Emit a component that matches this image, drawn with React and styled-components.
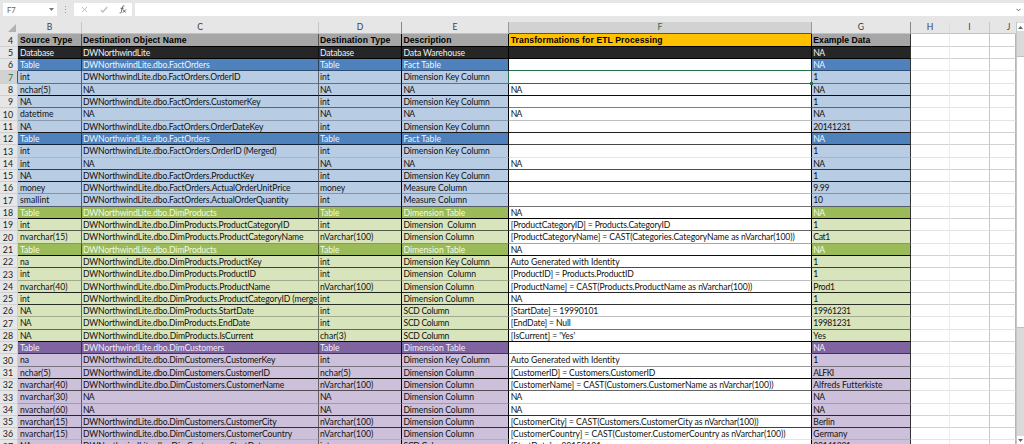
import React, { useLayoutEffect, useRef, useState } from "react";
import styled, { createGlobalStyle } from "styled-components";

const Global = createGlobalStyle`
  * { box-sizing: border-box; }
  body { margin: 0; overflow: hidden; background: #e6e6e6; font-family: Lato, "Liberation Sans", sans-serif; }
`;

const Window = styled.div`
  width: 1024px; height: 444px; overflow: hidden;
  display: flex; flex-direction: column; background: #e6e6e6;
`;
const FormulaBar = styled.div`
  height: 22px; flex: none; padding: 3px 0 6px 3px; display: flex; background: #e6e6e6;
`;
const NameBox = styled.div`
  width: 54px; height: 13px; background: #fff; display: flex; align-items: center;
  justify-content: space-between; padding: 0 3px 0 4px; color: #666; font-size: 7.6px;
`;
const Grip = styled.div`
  width: 17px; height: 13px; display: flex; align-items: center; justify-content: center;
`;
const Tools = styled.div`
  width: 58px; height: 13px; background: #fff; display: flex; align-items: center;
  justify-content: space-between; padding: 0 5px 0 7px;
`;
const FormulaInput = styled.div`
  flex: 1; height: 13px; margin-left: 3px; background: #fff; display: flex;
  align-items: center; justify-content: flex-end; padding-right: 3px;
`;
const Body = styled.div`flex: 1; display: flex; min-height: 0;`;
const Sheet = styled.div`width: 1016px; flex: none; overflow: hidden;`;
const columns = "18px 64px 237px 83px 107px 303px 99px 39px 40px 26px";
const HeaderRow = styled.div`
  display: grid; grid-template-columns: ${columns}; grid-template-rows: 12px; height: 12px;
`;
const ColumnHeader = styled.div`
  display: flex; align-items: center; justify-content: center;
  font-size: 8.6px; line-height: 11px; white-space: nowrap;
  color: ${(p) => (p.$active ? "#217346" : "#404040")};
  background: ${(p) => (p.$active ? "#d2d2d2" : "#e6e6e6")};
  border-right: 1px solid ${(p) => p.$edge || "#c6c6c6"};
  border-bottom: 1px solid ${(p) => (p.$active ? "#217346" : "#c2c2c2")};
  padding-left: ${(p) => (p.$last ? 12 : 0)}px;
`;
const Corner = styled.div`
  display: flex; align-items: flex-end; justify-content: flex-end; padding: 0 2px 2px 0;
`;
const Row = styled.div`
  display: grid; grid-template-columns: ${columns};
  grid-template-rows: ${(p) => p.$h}px; height: ${(p) => p.$h}px;
`;
const RowNumber = styled.div`
  padding-right: 4px; text-align: right; font-size: 8.8px;
  line-height: ${(p) => p.$h}px; color: ${(p) => (p.$active ? "#217346" : "#222")};
  background: ${(p) => (p.$active ? "#d2d2d2" : "#e6e6e6")};
  border-right: 1px solid ${(p) => (p.$active ? "#217346" : "#d0d0d0")};
  border-bottom: 1px solid #cfcfcf;
`;
const Cell = styled.div`
  position: relative; white-space: pre; padding-left: ${(p) => p.$pad}px;
  font-family: ${(p) => (p.$bold ? '"Liberation Sans", sans-serif' : 'Lato, "Liberation Sans", sans-serif')};
  font-size: 8.6px; font-weight: ${(p) => (p.$bold ? 700 : 400)};
  line-height: ${(p) => p.$h}px; color: ${(p) => p.$fg}; background: ${(p) => p.$bg};
  border-right: 1px solid ${(p) => p.$edge};
  border-bottom: 1px solid ${(p) => p.$line};
`;
const Label = styled.span`display: inline-block; vertical-align: top;`;
const FillHandle = styled.i`
  position: absolute; right: -2px; bottom: -2px; width: 3px; height: 3px; background: #217346; z-index: 1;
`;
const ScrollBar = styled.div`
  width: 8px; flex: none; display: flex; flex-direction: column; background: #dadada;
  border-left: 1px solid #c6c6c6; padding-top: 1px;
`;
const ScrollButton = styled.div`
  height: 8px; background: #fff; display: flex; align-items: center; justify-content: center;
`;
const ScrollTrack = styled.div`height: ${(p) => p.$h}px; background: #dadada;`;
const ScrollThumb = styled.div`flex: 1; background: #fff; border: 1px solid #c0c0c0; border-width: 1px 0;`;

const themes = {
  head: ["#a6a6a6", "#000"],
  black: ["#262626", "#f2f2f2"],
  blue: ["#4f81bd", "#eef4fb"],
  lblue: ["#b8cce4", "#111"],
  green: ["#9bbb59", "#f3f9e4"],
  lgreen: ["#d8e4bc", "#111"],
  purple: ["#8064a2", "#f4effa"],
  lpurple: ["#ccc0da", "#111"],
};

const W = "DWNorthwindLite";
const F = W + ".dbo.FactOrders";
const P = W + ".dbo.DimProducts";
const C = W + ".dbo.DimCustomers";
const key = "Dimension Key Column";
const dim = "Dimension Column";

// Advance width of each label in the sheet's compact type.
const widths = {
  "Source Type": 52.5, "Destination Object Name": 103.5, "Destination Type": 70.5, Description: 48,
  "Transformations for ETL Processing": 152, "Example Data": 57,
  Database: 34, Table: 19.5, int: 10, NA: 11, "nchar(5)": 30.5, datetime: 33.5, money: 25,
  smallint: 29.5, "nvarchar(15)": 47.5, "nvarchar(30)": 47.5, "nvarchar(40)": 47.5, "nvarchar(60)": 47.5,
  na: 9, "nVarchar(100)": 53.5, "char(3)": 26,
  [W]: 67, [F]: 126.5, [F + ".OrderID"]: 157.3, [F + ".CustomerKey"]: 177.5, [F + ".OrderDateKey"]: 180.3,
  [F + ".OrderID (Merged)"]: 193.5, [F + ".ProductKey"]: 171, [F + ".ActualOrderUnitPrice"]: 207.5,
  [F + ".ActualOrderQuantity"]: 205.5, [P]: 133.5, [P + ".ProductCategoryID"]: 206.3,
  [P + ".ProductCategoryName"]: 220.5, [P + ".ProductKey"]: 178.5, [P + ".ProductID"]: 173,
  [P + ".ProductName"]: 187, [P + ".ProductCategoryID (merge"]: 234.5, [P + ".StartDate"]: 171,
  [P + ".EndDate"]: 167, [P + ".IsCurrent"]: 170.3, [C]: 141, [C + ".CustomerKey"]: 192.3,
  [C + ".CustomerID"]: 187, [C + ".CustomerName"]: 201.3, [C + ".CustomerCity"]: 193.5,
  [C + ".CustomerCountry"]: 209,
  "Data Warehouse": 61.5, "Fact Table": 37.5, [key]: 86.3, "Measure Column": 63.5,
  "Dimension Table": 61.8, "Dimension  Column": 72.5, [dim]: 70.5, "SCD Column": 45.5,
  "[ProductCategoryID] = Products.CategoryID": 159.5,
  "[ProductCategoryName] = CAST(Categories.CategoryName as nVarchar(100))": 284,
  "Auto Generated with Identity": 109, "[ProductID] = Products.ProductID": 123,
  "[ProductName] = CAST(Products.ProductName as nVarchar(100))": 241.5,
  "[StartDate] = 19990101": 87.5, "[EndDate] = Null": 60, "[IsCurrent] = 'Yes'": 64.5,
  "[CustomerID] = Customers.CustomerID": 144.5,
  "[CustomerName] = CAST(Customers.CustomerName as nVarchar(100))": 262.8,
  "[CustomerCity] = CAST(Customers.CustomerCity as nVarchar(100))": 247.8,
  "[CustomerCountry] = CAST(Customer.CustomerCountry as nVarchar(100))": 274.8,
  "20141231": 37.5, "19961231": 37.5, "19981231": 37.5, "9.99": 16, "10": 9.5, Cat1: 16.5,
  Prod1: 21.5, Yes: 12.7, ALFKI: 20.3, "Alfreds Futterkiste": 69, Berlin: 21.3, Germany: 34,
};

function FittedLabel({ text }) {
  const ref = useRef(null);
  const [spacing, setSpacing] = useState(0);
  useLayoutEffect(() => {
    const target = widths[text];
    if (!target || !ref.current) return;
    const natural = ref.current.getBoundingClientRect().width - spacing * text.length;
    setSpacing(Math.round(((target - natural) / text.length) * 1000) / 1000);
  }, [text]);
  return <Label ref={ref} style={{ letterSpacing: spacing }}>{text}</Label>;
}

// [bottom line y, line darkness, theme, B, C, D, E, F, G]
const rows = [
  [46, 1, "head", "Source Type", "Destination Object Name", "Destination Type", "Description", "Transformations for ETL Processing", "Example Data"],
  [58, 1, "black", "Database", W, "Database", "Data Warehouse", "", "NA"],
  [70, 0.4, "blue", "Table", F, "Table", "Fact Table", "", "NA"],
  [83, 0.45, "lblue", "int", F + ".OrderID", "int", key, "", "1"],
  [95, 0.95, "lblue", "nchar(5)", "NA", "NA", "NA", "NA", "NA"],
  [107, 0.5, "lblue", "NA", F + ".CustomerKey", "int", key, "", "1"],
  [120, 0.25, "lblue", "datetime", "NA", "NA", "NA", "NA", "NA"],
  [132, 0.88, "lblue", "NA", F + ".OrderDateKey", "int", key, "", "20141231"],
  [144, 0.72, "blue", "Table", F, "Table", "Fact Table", "", "NA"],
  [157, 0.1, "lblue", "int", F + ".OrderID (Merged)", "int", key, "", "1"],
  [169, 0.7, "lblue", "int", "NA", "NA", "NA", "NA", "NA"],
  [181, 0.85, "lblue", "NA", F + ".ProductKey", "int", key, "", "1"],
  [193, 0.28, "lblue", "money", F + ".ActualOrderUnitPrice", "money", "Measure Column", "", "9.99"],
  [206, 0.55, "lblue", "smallint", F + ".ActualOrderQuantity", "int", "Measure Column", "", "10"],
  [218, 0.97, "green", "Table", P, "Table", "Dimension Table", "NA", "NA"],
  [230, 0.6, "lgreen", "int", P + ".ProductCategoryID", "int", "Dimension  Column", "[ProductCategoryID] = Products.CategoryID", "1"],
  [243, 0.35, "lgreen", "nvarchar(15)", P + ".ProductCategoryName", "nVarchar(100)", dim, "[ProductCategoryName] = CAST(Categories.CategoryName as nVarchar(100))", "Cat1"],
  [255, 0.95, "green", "Table", P, "Table", "Dimension Table", "NA", "NA"],
  [267, 0.7, "lgreen", "na", P + ".ProductKey", "int", key, "Auto Generated with Identity", "1"],
  [280, 0.25, "lgreen", "int", P + ".ProductID", "int", "Dimension  Column", "[ProductID] = Products.ProductID", "1"],
  [292, 0.85, "lgreen", "nvarchar(40)", P + ".ProductName", "nVarchar(100)", dim, "[ProductName] = CAST(Products.ProductName as nVarchar(100))", "Prod1"],
  [304, 0.8, "lgreen", "int", P + ".ProductCategoryID (merge", "int", dim, "NA", "1"],
  [316, 0.25, "lgreen", "NA", P + ".StartDate", "int", "SCD Column", "[StartDate] = 19990101", "19961231"],
  [329, 0.55, "lgreen", "NA", P + ".EndDate", "int", "SCD Column", "[EndDate] = Null", "19981231"],
  [341, 0.95, "lgreen", "NA", P + ".IsCurrent", "char(3)", "SCD Column", "[IsCurrent] = 'Yes'", "Yes"],
  [353, 0.5, "purple", "Table", C, "Table", "Dimension Table", "", "NA"],
  [366, 0.4, "lpurple", "na", C + ".CustomerKey", "int", key, "Auto Generated with Identity", "1"],
  [378, 0.95, "lpurple", "nchar(5)", C + ".CustomerID", "nchar(5)", dim, "[CustomerID] = Customers.CustomerID", "ALFKI"],
  [390, 0.6, "lpurple", "nvarchar(40)", C + ".CustomerName", "nVarchar(100)", dim, "[CustomerName] = CAST(Customers.CustomerName as nVarchar(100))", "Alfreds Futterkiste"],
  [403, 0.2, "lpurple", "nvarchar(30)", "NA", "NA", dim, "NA", "NA"],
  [415, 0.8, "lpurple", "nvarchar(60)", "NA", "NA", dim, "NA", "NA"],
  [427, 0.75, "lpurple", "nvarchar(15)", C + ".CustomerCity", "nVarchar(100)", dim, "[CustomerCity] = CAST(Customers.CustomerCity as nVarchar(100))", "Berlin"],
  [439, 0.1, "lpurple", "nvarchar(15)", C + ".CustomerCountry", "nVarchar(100)", dim, "[CustomerCountry] = CAST(Customer.CustomerCountry as nVarchar(100))", "Germany"],
  [452, 0.5, "lpurple", "NA", C + ".StartDate", "int", "SCD Column", "[StartDate] = 20150101", "20141231"],
];

const pads = [2, 1, 1, 1.5, 1.7, 1.3];
const edges = ["rgba(0,0,0,.55)", "rgba(0,0,0,.5)", "#000", "#000", "#000", "#333"];

function SheetRow({ row, index }) {
  const [y, a, theme, ...cells] = row;
  const h = y - (index ? rows[index - 1][0] : 33);
  const active = index === 3;
  const head = index === 0;
  return (
    <Row $h={h}>
      <RowNumber $h={h} $active={active}>{index + 4}</RowNumber>
      {cells.map((text, c) => {
        let [bg, fg] = themes[theme];
        let line = `rgba(0,0,0,${a})`;
        if (c === 4) {
          if (head) bg = "#ffc000";
          else if (theme !== "black") { bg = "#fff"; fg = "#111"; }
          if (index === 2 || active) line = "#217346";
        }
        const edge = active && (c === 3 || c === 4) ? "#217346" : edges[c];
        return (
          <Cell key={c} $h={h} $pad={pads[c]} $bold={head} $bg={bg} $fg={fg} $line={line} $edge={edge}>
            {text && <FittedLabel text={text} />}
            {active && c === 4 && <FillHandle />}
          </Cell>
        );
      })}
      {[0, 1, 2].map((c) => (
        <Cell key={"e" + c} $h={h} $pad={0} $bg="#fff" $fg="#000"
          $line={a > 0.6 ? "#d2d2d2" : "#e4e4e4"} $edge={["#ececec", "#c8c8c8", "#b5b5b5"][c]} />
      ))}
    </Row>
  );
}

export default function App() {
  return (
    <Window>
      <Global />
      <FormulaBar>
        <NameBox>F7<svg width="5" height="3"><path d="M0 0H5L2.5 3Z" fill="#777" /></svg></NameBox>
        <Grip><svg width="2" height="8" fill="#999"><path d="M0 0h1v1H0zM0 3h1v1H0zM0 6h1v1H0z" /></svg></Grip>
        <Tools>
          <svg width="7" height="7" viewBox="0 0 7 7"><path d="M1 1L6 6M6 1L1 6" stroke="#bbb" strokeWidth="1" /></svg>
          <svg width="8" height="7" viewBox="0 0 8 7"><path d="M.8 4L2.8 6L7.2 1" stroke="#bbb" strokeWidth="1.2" fill="none" /></svg>
          <svg width="8" height="9" viewBox="0 0 8 9" fill="none" stroke="#555" strokeWidth=".9"><path d="M5.4 1.1C4 .4 3.5 1.4 3.2 3L2.4 6.7C2.1 8 1.4 8.3.6 7.9M1.6 3.3H4.6M4 4.6L6.7 7.6M6.9 4.5L3.8 7.7" /></svg>
        </Tools>
        <FormulaInput><svg width="5" height="4" viewBox="0 0 5 4"><path d="M.5 .8L2.5 2.8L4.5 .8" stroke="#666" fill="none" /></svg></FormulaInput>
      </FormulaBar>
      <Body>
        <Sheet>
          <HeaderRow>
            <Corner><svg width="8" height="8"><path d="M8 0V8H0Z" fill="#b2b2b2" /></svg></Corner>
            {["B", "C", "D", "E", "F", "G", "H", "I", "J"].map((n) => (
              <ColumnHeader key={n} $active={n === "F"} $last={n === "J"} $edge={{ D: "#888", E: "#999", F: "#999", G: "#888", H: "#dcdcdc", J: "#e6e6e6" }[n]}>{n}</ColumnHeader>
            ))}
          </HeaderRow>
          {rows.map((r, i) => <SheetRow key={i} row={r} index={i} />)}
        </Sheet>
        <ScrollBar>
          <ScrollButton><svg width="5" height="3"><path d="M0 3H5L2.5 0Z" fill="#666" /></svg></ScrollButton>
          <ScrollTrack $h={25} />
          <ScrollThumb />
          <ScrollTrack $h={108} />
          <ScrollButton><svg width="5" height="3"><path d="M0 0H5L2.5 3Z" fill="#666" /></svg></ScrollButton>
        </ScrollBar>
      </Body>
    </Window>
  );
}
